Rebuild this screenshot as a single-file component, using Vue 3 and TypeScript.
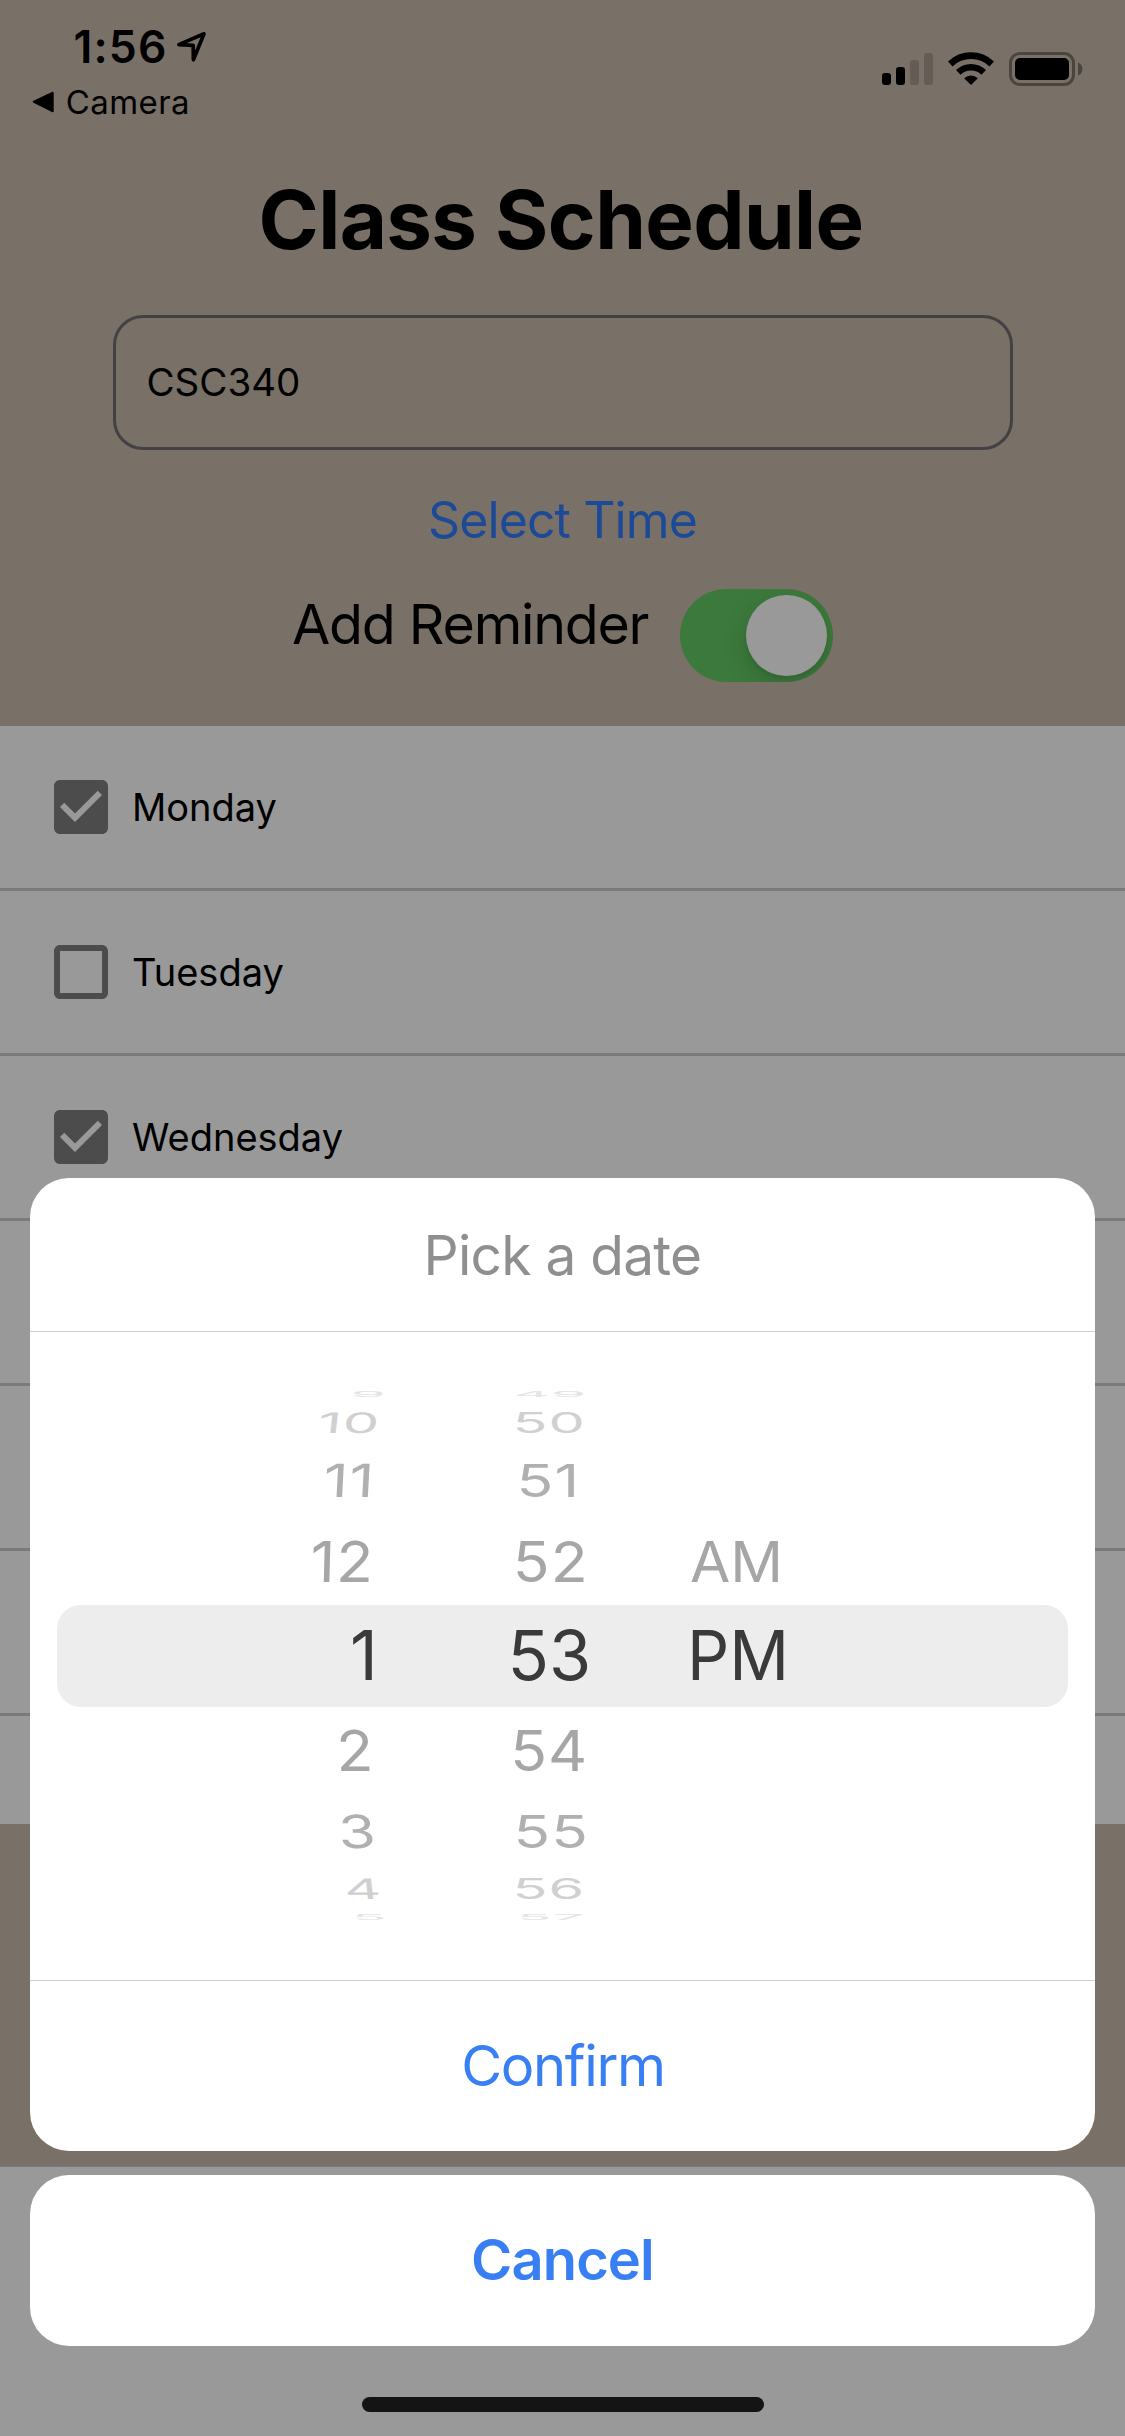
<script setup lang="ts">
interface Day {
  name: string
  checked: boolean
}

interface Cell {
  text: string
  dx: number
}

interface WheelRow {
  kind: string
  height: number
  scaleX: number
  scaleY: number
  skew: number
  dy?: number
  hour: Cell
  minute: Cell
  period?: Cell & { scaleX: number }
}

const days: Day[] = [
  { name: 'Monday', checked: true },
  { name: 'Tuesday', checked: false },
  { name: 'Wednesday', checked: true },
  { name: '', checked: false },
  { name: '', checked: false },
  { name: '', checked: false },
  { name: '', checked: false }
]

const rows: WheelRow[] = [
  { kind: 'far', height: 17, scaleX: 1.01, scaleY: 0.145, skew: -11, dy: -0.5, hour: { text: '9', dx: 12 }, minute: { text: '49', dx: -0.5 } },
  { kind: 'third', height: 40, scaleX: 1.02, scaleY: 0.5, skew: -6.5, hour: { text: '10', dx: 5.6 }, minute: { text: '50', dx: -1.8 } },
  { kind: 'second', height: 75, scaleX: 1.075, scaleY: 0.81, skew: -3, hour: { text: '11', dx: 0.2 }, minute: { text: '51', dx: -2.2 } },
  { kind: 'first', height: 87, scaleX: 1.075, scaleY: 1, skew: -1.5, hour: { text: '12', dx: -1 }, minute: { text: '52', dx: -0.5 }, period: { text: 'AM', dx: 4, scaleX: 1.035 } },
  { kind: 'selected', height: 102, scaleX: 1, scaleY: 1, skew: 0, dy: -1, hour: { text: '1', dx: 2.8 }, minute: { text: '53', dx: -1.7 }, period: { text: 'PM', dx: 1, scaleX: 0.97 } },
  { kind: 'first', height: 87, scaleX: 1.075, scaleY: 1, skew: 1.5, dy: -0.5, hour: { text: '2', dx: -1 }, minute: { text: '54', dx: -2.1 } },
  { kind: 'second', height: 75, scaleX: 1.07, scaleY: 0.81, skew: 3, dy: -0.5, hour: { text: '3', dx: 2 }, minute: { text: '55', dx: 0 } },
  { kind: 'third', height: 40, scaleX: 1.02, scaleY: 0.5, skew: 6.5, dy: -0.5, hour: { text: '4', dx: 6.6 }, minute: { text: '56', dx: -1.8 } },
  { kind: 'far', height: 17, scaleX: 1.01, scaleY: 0.145, skew: 11, dy: -1, hour: { text: '5', dx: 12 }, minute: { text: '57', dx: 0.3 } }
]

const tilt = (dx: number, dy: number, skew: number, sx: number, sy: number) => ({
  transform: `translate(${dx}px, ${dy}px) skewX(${skew}deg) scale(${sx}, ${sy})`
})
</script>

<template>
  <div class="screen">
    <header class="top">
      <div class="status">
        <div class="status-left">
          <div class="clock">
            <span>1:56</span>
            <svg class="arrow" width="34" height="34" viewBox="0 0 34 34">
              <path d="M31 3.8 5.8 14.6 20.200 15.400 20.400 29.800Z" fill="none" stroke="#000" stroke-width="3.7" stroke-linejoin="round" />
            </svg>
          </div>
          <div class="back">
            <svg width="22" height="22" viewBox="0 0 22 22">
              <path d="M2 10.8 20.5 2V20Z" stroke="#000" stroke-width="2.4" stroke-linejoin="round" />
            </svg>
            <span>Camera</span>
          </div>
        </div>
        <svg class="indicators" width="205" height="38" viewBox="880 50 205 38">
          <rect x="882" y="73" width="9" height="12" rx="3" />
          <rect x="896" y="67" width="9" height="18" rx="3" />
          <rect x="910" y="60" width="9" height="25" rx="3" fill="#655c55" />
          <rect x="924" y="53" width="9" height="32" rx="3" fill="#655c55" />
          <path d="M948 61.5a33 33 0 0 1 46 0l-4.6 4.9a26.4 26.4 0 0 0-36.8 0Z" />
          <path d="M956 70a21.5 21.5 0 0 1 30 0l-4.6 4.8a15 15 0 0 0-20.8 0Z" />
          <path d="M964.2 78.3a9.8 9.8 0 0 1 13.6 0L971 85Z" />
          <rect x="1010.5" y="53.5" width="63" height="31" rx="9.5" fill="none" stroke="#4b4540" stroke-width="3" />
          <rect x="1015" y="58" width="54" height="22" rx="5" />
          <path d="M1078 62.5a7 7 0 0 1 0 13Z" fill="#4b4540" />
        </svg>
      </div>

      <h1>Class Schedule</h1>
      <div class="field">CSC340</div>
      <div class="select">Select Time</div>
      <div class="reminder">
        <span class="reminder-label">Add Reminder</span>
        <div class="toggle"><div class="knob"></div></div>
      </div>
    </header>

    <section class="days">
      <div v-for="(day, i) in days" :key="i" class="day">
        <svg v-if="day.name" width="72" height="72" viewBox="0 0 24 24" fill="#4c4c4c">
          <path
            v-if="day.checked"
            d="M19 3H5c-1.11 0-2 .9-2 2v14c0 1.1.89 2 2 2h14c1.11 0 2-.9 2-2V5c0-1.1-.89-2-2-2zm-9 14l-5-5 1.41-1.41L10 14.17l7.59-7.59L19 8l-9 9z"
          />
          <path v-else d="M19 5v14H5V5h14m0-2H5c-1.1 0-2 .9-2 2v14c0 1.1.9 2 2 2h14c1.1 0 2-.9 2-2V5c0-1.1-.9-2-2-2z" />
        </svg>
        <span>{{ day.name }}</span>
      </div>
    </section>
    <div class="filler"></div>
    <div class="tabbar"></div>

    <div class="sheet">
      <div class="card">
        <div class="caption">Pick a date</div>
        <div class="picker">
          <div v-for="(row, i) in rows" :key="i" class="row" :class="row.kind" :style="{ height: row.height + 'px' }">
            <span class="hour"><b :style="tilt(row.hour.dx, row.dy ?? 0, row.skew, row.scaleX, row.scaleY)">{{ row.hour.text }}</b></span>
            <span class="minute"><b :style="tilt(row.minute.dx, row.dy ?? 0, 0, row.scaleX, row.scaleY)">{{ row.minute.text }}</b></span>
            <span class="period">
              <b v-if="row.period" :style="tilt(row.period.dx, row.dy ?? 0, 0, row.period.scaleX, 1)">{{ row.period.text }}</b>
            </span>
          </div>
        </div>
        <div class="action">Confirm</div>
      </div>
      <div class="card cancel">Cancel</div>
      <div class="home"></div>
    </div>
  </div>
</template>

<style>
body {
  margin: 0;
}
</style>

<style scoped>
.screen {
  position: relative;
  width: 1125px;
  height: 2436px;
  overflow: hidden;
  display: flex;
  flex-direction: column;
  background: #999;
  color: #000;
  font-family: Inter, "Liberation Sans", sans-serif;
  box-sizing: border-box;
}
.top {
  height: 726px;
  flex: none;
  background: #797067;
}
.status {
  display: flex;
  justify-content: space-between;
  height: 128px;
}
.status-left {
  padding-top: 17px;
}
.clock {
  display: flex;
  align-items: center;
  height: 60px;
  padding-left: 73.5px;
  font-size: 44.5px;
  font-weight: 600;
  letter-spacing: 1.17px;
  line-height: 60px;
}
.arrow {
  margin-left: 5px;
}
.back {
  display: flex;
  align-items: center;
  height: 50px;
  padding-left: 32px;
  gap: 11.8px;
  font-size: 33px;
  letter-spacing: 0.4px;
}
.indicators {
  margin: 50px 40px 0 0;
}
h1 {
  margin: 0;
  padding-right: 3px;
  height: 183px;
  line-height: 183px;
  text-align: center;
  font-size: 81.5px;
  font-weight: 700;
  letter-spacing: -0.62px;
}
.field {
  box-sizing: border-box;
  width: 900px;
  height: 135px;
  margin: 4px auto 0;
  padding-left: 31px;
  border: 3px solid #444145;
  border-radius: 30px;
  font-size: 38.5px;
  letter-spacing: 0;
  line-height: 129px;
}
.select {
  height: 139px;
  line-height: 140px;
  text-align: center;
  color: #1d4a96;
  font-size: 50px;
  letter-spacing: -0.9px;
}
.reminder {
  display: flex;
  padding-left: 292px;
}
.reminder-label {
  width: 388px;
  line-height: 70px;
  font-size: 55.5px;
  letter-spacing: -1.25px;
  white-space: nowrap;
}
.toggle {
  box-sizing: border-box;
  display: flex;
  justify-content: flex-end;
  width: 153px;
  height: 93px;
  padding: 6px;
  border-radius: 47px;
  background: #3c793c;
  overflow: hidden;
}
.knob {
  width: 81px;
  height: 81px;
  border-radius: 50%;
  background: #999;
  box-shadow: 0 9px 24px rgba(0, 0, 0, 0.15), 0 3px 3px rgba(0, 0, 0, 0.06);
}
.days {
  flex: none;
  height: 1098px;
  overflow: hidden;
}
.day {
  box-sizing: border-box;
  display: flex;
  align-items: center;
  gap: 15px;
  height: 165px;
  padding-left: 45px;
  border-bottom: 3px solid #7a7a7a;
  font-size: 38px;
  letter-spacing: 0;
}
.filler {
  flex: none;
  height: 342px;
  background: #797067;
}
.tabbar {
  flex: 1;
  border-top: 1px solid #7a7a7a;
}
.sheet {
  position: absolute;
  top: 1178px;
  left: 30px;
  right: 30px;
  bottom: 0;
}
.card {
  box-sizing: border-box;
  border-radius: 39px;
  background: #fff;
  text-align: center;
}
.caption {
  height: 153px;
  line-height: 154px;
  color: #8f8f8f;
  font-size: 55px;
  letter-spacing: -0.74px;
  border-bottom: 1px solid #cfcfd1;
}
.picker {
  padding: 54px 0;
}
.row {
  display: grid;
  grid-template-columns: 345px 311px 1fr;
  align-items: center;
  font-size: 56.4px;
  letter-spacing: 1px;
  line-height: 0;
}
.row b {
  display: inline-block;
  line-height: 0;
  font-weight: 400;
}
.hour {
  text-align: right;
}
.hour b {
  transform-origin: 100% 50%;
}
.minute {
  padding-left: 41px;
}
.period {
  text-align: left;
  letter-spacing: 0;
}
.period b {
  transform-origin: 0 50%;
}
.far {
  color: #e4e4e4;
}
.third {
  color: #d0d0d0;
}
.second {
  color: #b0b0b0;
}
.first {
  color: #a6a6a6;
}
.selected {
  grid-template-columns: 318px 311px 1fr;
  margin: 0 27px;
  border-radius: 24px;
  background: #ededed;
  color: #3a3a3a;
  font-size: 68.3px;
  letter-spacing: 0;
}
.action {
  height: 170px;
  line-height: 170px;
  padding-left: 1px;
  border-top: 1px solid #cfcfd1;
  color: #377ff2;
  font-size: 56px;
  letter-spacing: -1.35px;
}
.cancel {
  height: 171px;
  margin-top: 24px;
  line-height: 171px;
  color: #377ff2;
  font-size: 56px;
  font-weight: 600;
  letter-spacing: -0.88px;
}
.home {
  width: 402px;
  height: 15px;
  margin: 51px auto 0;
  border-radius: 8px;
  background: #141414;
}
</style>
